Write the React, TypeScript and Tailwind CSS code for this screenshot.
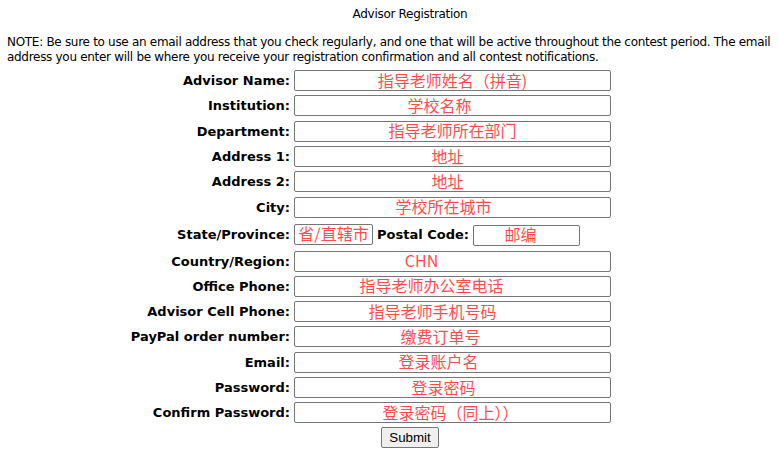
const rows: { label: string; hint: string; shift: string }[] = [
  { label: 'Advisor Name:', hint: '指导老师姓名（拼音)', shift: 'pr-[0px]' },
  { label: 'Institution:', hint: '学校名称', shift: 'pr-[26px]' },
  { label: 'Department:', hint: '指导老师所在部门', shift: 'pr-[0px]' },
  { label: 'Address 1:', hint: '地址', shift: 'pr-[10px]' },
  { label: 'Address 2:', hint: '地址', shift: 'pr-[10px]' },
  { label: 'City:', hint: '学校所在城市', shift: 'pr-[18px]' },
]

const rows2: { label: string; hint: string; shift: string }[] = [
  { label: 'Country/Region:', hint: 'CHN', shift: 'pr-[62px]' },
  { label: 'Office Phone:', hint: '指导老师办公室电话', shift: 'pr-[42px]' },
  { label: 'Advisor Cell Phone:', hint: '指导老师手机号码', shift: 'pr-[40px]' },
  { label: 'PayPal order number:', hint: '缴费订单号', shift: 'pr-[24px]' },
  { label: 'Email:', hint: '登录账户名', shift: 'pr-[28px]' },
  { label: 'Password:', hint: '登录密码', shift: 'pr-[18px]' },
  { label: 'Confirm Password:', hint: '登录密码（同上））', shift: 'pr-[4px]' },
]

const red = "text-[#ff4d4f] text-[16px] leading-none tracking-normal font-['Noto_Sans_CJK_SC',sans-serif] whitespace-nowrap"

function Field({ hint, w = 'w-[317px]', shift = '' }: { hint: string; w?: string; shift?: string }) {
  return (
    <div className={`${w} ${shift} h-[21px] pb-[2px] border border-[#767676] rounded-[2px] flex items-center justify-center overflow-visible ${red}`}>
      {hint}
    </div>
  )
}

function Row({ label, hint, shift }: { label: string; hint: string; shift: string }) {
  return (
    <div className='flex items-center h-[25.3px]'>
      <div className='w-[290px] text-right font-bold'>{label}</div>
      <div className='ml-[4px]'>
        <Field hint={hint} shift={shift} />
      </div>
    </div>
  )
}

export default function App() {
  return (
    <div className="w-[779px] h-[457px] bg-white text-black text-[12px] leading-[15px] font-['DejaVu_Sans',Verdana,sans-serif] overflow-hidden">
      <div className='pt-[7px] pl-[41px] text-center tracking-[-0.3px]'>Advisor Registration</div>
      <p className='mt-[13px] px-[7px] tracking-[-0.3px]'>
        NOTE: Be sure to use an email address that you check regularly, and one that will be active throughout the contest period. The email address you enter will be where you receive your registration confirmation and all contest notifications.
      </p>
      <div className='mt-[3px] text-[13px]'>
        {rows.map((r) => (
          <Row key={r.label} {...r} />
        ))}
        <div className='flex items-center h-[28.6px]'>
          <div className='w-[290px] text-right font-bold'>State/Province:</div>
          <div className='ml-[4px] flex items-center'>
            <Field hint='省/直辖市' w='w-[79px]' />
            <div className='ml-[4px] font-bold'>Postal Code:</div>
            <div className='ml-[4px] mt-[2px]'>
              <Field hint='邮编' w='w-[107px]' shift='pr-[12px]' />
            </div>
          </div>
        </div>
        {rows2.map((r) => (
          <Row key={r.label} {...r} />
        ))}
        <div className='flex justify-center pl-[41px] mt-[2px]'>
          <button className="h-[21px] px-[7px] bg-[#efefef] border border-[#767676] rounded-[2px] text-[13.33px] font-['Liberation_Sans',Arial,sans-serif]">
            Submit
          </button>
        </div>
      </div>
    </div>
  )
}
